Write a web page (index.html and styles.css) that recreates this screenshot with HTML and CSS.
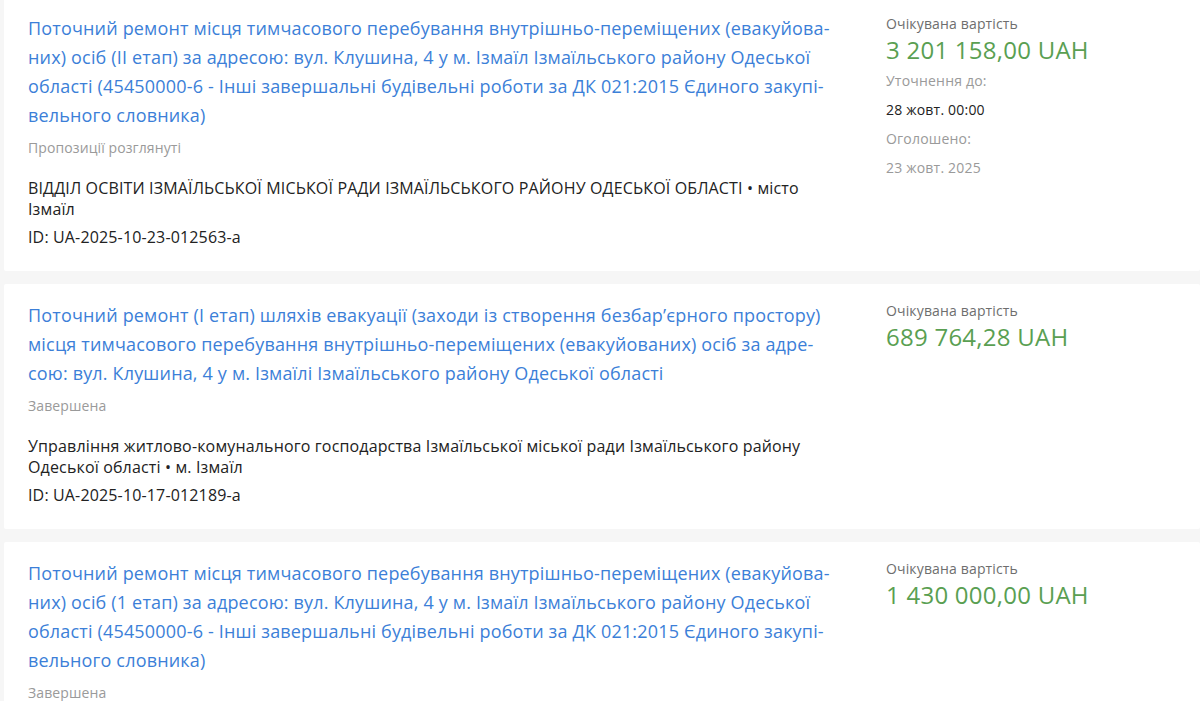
FILE: index.html
```html
<!DOCTYPE html>
<html lang="uk">
<head>
<meta charset="utf-8">
<title>Тендери</title>
<link rel="stylesheet" href="styles.css">
</head>
<body>
<div class="list">
  <div class="card">
    <div class="main">
      <a class="title" href="#">Поточний ремонт місця тимчасового перебування внутрішньо-переміщених (евакуйова&shy;них) осіб (ІІ етап) за адресою: вул. Клушина, 4 у м. Ізмаїл Ізмаїльського району Одеської області (45450000-6 - Інші завершальні будівельні роботи за ДК 021:2015 Єдиного закупі&shy;вельного словника)</a>
      <div class="status">Пропозиції розглянуті</div>
      <div class="org">ВІДДІЛ ОСВІТИ ІЗМАЇЛЬСЬКОЇ МІСЬКОЇ РАДИ ІЗМАЇЛЬСЬКОГО РАЙОНУ ОДЕСЬКОЇ ОБЛАСТІ • місто Ізмаїл</div>
      <div class="id">ID: UA-2025-10-23-012563-a</div>
    </div>
    <div class="side">
      <div class="label">Очікувана вартість</div>
      <div class="price">3 201 158,00 UAH</div>
      <div class="row muted">Уточнення до:</div>
      <div class="row dark">28 жовт. 00:00</div>
      <div class="row muted">Оголошено:</div>
      <div class="row muted">23 жовт. 2025</div>
    </div>
  </div>

  <div class="card">
    <div class="main">
      <a class="title" href="#">Поточний ремонт (І етап) шляхів евакуації (заходи із створення безбар’єрного простору) місця тимчасового перебування внутрішньо-переміщених (евакуйованих) осіб за адре&shy;сою: вул. Клушина, 4 у м. Ізмаїлі Ізмаїльського району Одеської області</a>
      <div class="status">Завершена</div>
      <div class="org">Управління житлово-комунального господарства Ізмаїльської міської ради Ізмаїльського району Одеської області • м. Ізмаїл</div>
      <div class="id">ID: UA-2025-10-17-012189-a</div>
    </div>
    <div class="side">
      <div class="label">Очікувана вартість</div>
      <div class="price">689 764,28 UAH</div>
    </div>
  </div>

  <div class="card">
    <div class="main">
      <a class="title" href="#">Поточний ремонт місця тимчасового перебування внутрішньо-переміщених (евакуйова&shy;них) осіб (1 етап) за адресою: вул. Клушина, 4 у м. Ізмаїл Ізмаїльського району Одеської області (45450000-6 - Інші завершальні будівельні роботи за ДК 021:2015 Єдиного закупі&shy;вельного словника)</a>
      <div class="status">Завершена</div>
      <div class="org">Управління житлово-комунального господарства Ізмаїльської міської ради Ізмаїльського району Одеської області • м. Ізмаїл</div>
      <div class="id">ID: UA-2025-10-17-012190-a</div>
    </div>
    <div class="side">
      <div class="label">Очікувана вартість</div>
      <div class="price">1 430 000,00 UAH</div>
    </div>
  </div>
</div>
</body>
</html>
```

FILE: styles.css
```css
html, body {
  margin: 0;
  padding: 0;
}
body {
  background: #f6f6f6;
  font-family: "Open Sans", "Noto Sans", sans-serif;
  color: #222;
  overflow: hidden;
}
.list {
  margin-top: -3px;
  padding-left: 4px;
  display: flex;
  flex-direction: column;
  gap: 13px;
}
.card {
  background: #fff;
  display: grid;
  grid-template-columns: 815px 1fr;
  column-gap: 43px;
  padding: 17px 24px 24px 24px;
  border-radius: 2px;
}
.main {
  display: flex;
  flex-direction: column;
  align-items: flex-start;
}
.title {
  color: #3c7fd8;
  text-decoration: none;
  font-size: 18px;
  line-height: 29px;
  letter-spacing: 0.17px;
  hyphens: manual;
}
.status {
  margin-top: 8px;
  font-size: 14px;
  line-height: 20px;
  letter-spacing: 0.1px;
  color: #9a9a9a;
}
.org {
  margin-top: 20px;
  font-size: 16px;
  line-height: 20.5px;
  letter-spacing: 0.15px;
  color: #222;
}
.id {
  margin-top: 8px;
  font-size: 16px;
  line-height: 20px;
  letter-spacing: 0.15px;
  color: #222;
}
.side {
  display: flex;
  flex-direction: column;
}
.label {
  font-size: 14px;
  line-height: 20px;
  letter-spacing: 0.15px;
  color: #6e6e6e;
}
.price {
  font-size: 24px;
  line-height: 32px;
  letter-spacing: 0.25px;
  color: #5a9f52;
}
.row {
  font-size: 14px;
  line-height: 29px;
  letter-spacing: 0.2px;
}
.row.muted {
  color: #9a9a9a;
}
.row.dark {
  color: #222;
}
```
